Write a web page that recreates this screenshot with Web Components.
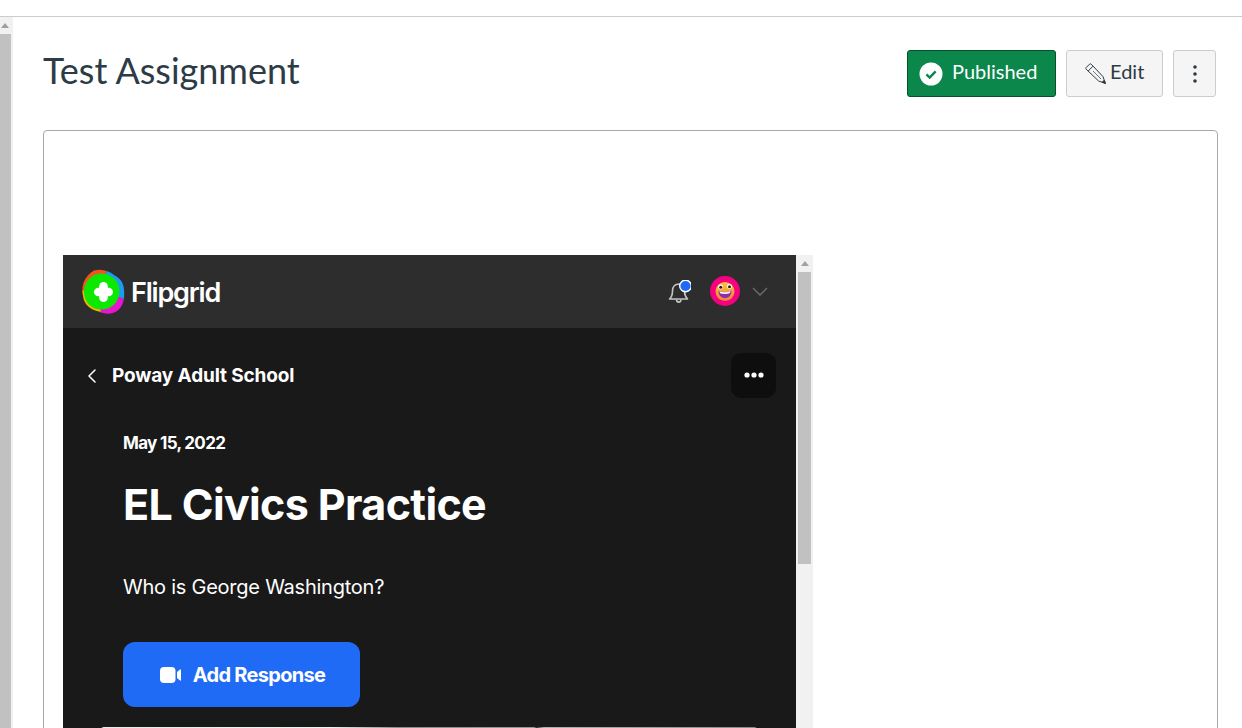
<!DOCTYPE html>
<html lang="en">
<head>
<meta charset="utf-8">
<title>Test Assignment</title>
<style>
  html, body { margin: 0; height: 728px; overflow: hidden; background: #fff; }
</style>
</head>
<body>
<assignment-page>
  <assignment-header slot="header" title-text="Test Assignment"></assignment-header>
  <assignment-box>
    <flipgrid-frame></flipgrid-frame>
  </assignment-box>
</assignment-page>

<script>
// Fake browser scrollbar, used for the page and for the embedded frame
class FakeScrollbar extends HTMLElement {
  constructor() {
    super();
    this.attachShadow({ mode: 'open' });
  }

  connectedCallback() {
    const width = this.getAttribute('bar-width') || 17;
    const arrowWidth = this.getAttribute('arrow-width') || width;
    const thumbWidth = this.getAttribute('thumb-width') || 13;
    const thumbLeft = this.getAttribute('thumb-left') || 0;
    const thumbHeight = this.getAttribute('thumb-height') || 292;
    this.shadowRoot.innerHTML = `
      <style>
        :host { display: block; flex: none; width: ${width}px; background: #f1f1f1; overflow: hidden; }
        .arrow { width: ${arrowWidth}px; height: 17px; display: flex; align-items: center; justify-content: center; }
        .arrow svg { display: block; }
        .thumb { width: ${thumbWidth}px; margin-left: ${thumbLeft}px; height: ${thumbHeight}px; background: #c1c1c1; }
      </style>
      <div class="arrow"><svg width="8" height="5" viewBox="0 0 8 5"><path d="M4 0 L8 5 H0 Z" fill="#a0a0a0"/></svg></div>
      <div class="thumb"></div>
    `;
  }
}

class AssignmentPage extends HTMLElement {
  constructor() {
    super();
    this.attachShadow({ mode: 'open' });
    this.shadowRoot.innerHTML = `
      <style>
        :host { display: block; height: 728px; overflow: hidden; font-family: Lato, "Liberation Sans", sans-serif; color: #2d3b45; }
        .topbar { height: 16px; border-bottom: 1px solid #c7cdd1; }
        .body { display: flex; height: 711px; }
        .main { flex: 1; min-width: 0; padding: 33px 24px 0 30px; }
      </style>
      <div class="topbar"></div>
      <div class="body">
        <fake-scrollbar bar-width="13" arrow-width="9" thumb-width="11" thumb-height="694"></fake-scrollbar>
        <div class="main">
          <slot name="header"></slot>
          <slot></slot>
        </div>
      </div>
    `;
  }
}

class CanvasButton extends HTMLElement {
  constructor() {
    super();
    this.attachShadow({ mode: 'open' });
    this.shadowRoot.innerHTML = `
      <style>
        :host {
          display: inline-flex; align-items: center; box-sizing: border-box; height: 47px;
          background: #f5f5f5; border: 1px solid #c7cdd1; border-radius: 3px; color: #2d3b45;
          font-size: 20px; line-height: 1;
        }
        :host([variant="success"]) { background: #0b874b; border-color: #06502c; color: #fff; }
      </style>
      <slot></slot>
    `;
  }
}

class AssignmentHeader extends HTMLElement {
  constructor() {
    super();
    this.attachShadow({ mode: 'open' });
    this.shadowRoot.innerHTML = `
      <style>
        :host { display: flex; justify-content: space-between; align-items: center; padding-right: 2px; }
        h1 { margin: -7px 0 0; font-size: 36px; font-weight: 400; line-height: 45px; color: #2d3b45; }
        .actions { display: flex; gap: 10px; }
        .published { width: 149px; padding-left: 11px; gap: 9px; }
        .edit { width: 97px; padding-left: 18px; gap: 4px; }
        .more { width: 43px; justify-content: center; }
        .label { margin-bottom: 5px; }
        svg { display: block; flex: none; }
      </style>
      <h1></h1>
      <div class="actions">
        <canvas-button class="published" variant="success">
          <svg width="24" height="24" viewBox="0 0 24 24"><circle cx="12" cy="12" r="11.5" fill="#fff"/><path d="M7.4 12.4 L10.7 15.6 L16.6 9.4" fill="none" stroke="#0b874b" stroke-width="2.4"/></svg>
          <span class="label">Published</span>
        </canvas-button>
        <canvas-button class="edit">
          <svg width="21" height="21" viewBox="0 0 21 21" fill="none" stroke="#2d3b45" stroke-width="1" stroke-linejoin="round"><path d="M1.2 6.2 C0.7 5.7 0.7 5 1.2 4.5 L4.5 1.2 C5 0.7 5.7 0.7 6.2 1.2 L18 13.6 L20.4 20.4 L13.6 18 Z"/><path d="M3.2 8 L8 3.2"/><path d="M8 8 L16 16" stroke="#6a757d"/><path d="M17.2 19.2 L19.2 17.2 L20.4 20.4 Z" fill="#2d3b45"/></svg>
          <span class="label">Edit</span>
        </canvas-button>
        <canvas-button class="more">
          <svg width="4" height="18" viewBox="0 0 4 18" fill="#2d3b45"><circle cx="2" cy="2" r="1.8"/><circle cx="2" cy="9" r="1.8"/><circle cx="2" cy="16" r="1.8"/></svg>
        </canvas-button>
      </div>
    `;
    this.shadowRoot.querySelector('h1').textContent = this.getAttribute('title-text') || '';
  }
}

class AssignmentBox extends HTMLElement {
  constructor() {
    super();
    this.attachShadow({ mode: 'open' });
    this.shadowRoot.innerHTML = `
      <style>
        :host {
          display: block; margin-top: 33px; box-sizing: border-box; height: 700px;
          border: 1px solid #a9a9a9; border-radius: 4px; padding: 124px 0 0 19px;
        }
      </style>
      <slot></slot>
    `;
  }
}

// The embedded Flipgrid topic page
class FlipgridFrame extends HTMLElement {
  constructor() {
    super();
    this.attachShadow({ mode: 'open' });
    this.shadowRoot.innerHTML = `
      <style>
        :host { display: flex; width: 750px; height: 473px; font-family: Inter, "Liberation Sans", sans-serif; color: #fff; }
        .content { flex: none; width: 733px; background: #191919; overflow: hidden; }
        .topbar { display: flex; align-items: center; height: 73px; background: #2d2d2d; padding: 0 28px 0 19px; box-sizing: border-box; }
        .brand { display: flex; align-items: center; gap: 5px; font-size: 27px; font-weight: 600; letter-spacing: -1.2px; }
        .brand span { margin-top: 1px; }
        .right { margin-left: auto; display: flex; align-items: center; }
        .bell { margin-right: 19px; }
        .avatar { margin-top: -1px; }
        .chev { margin-left: 12px; }
        .nav { display: flex; align-items: center; height: 45px; margin-top: 25px; padding: 0 20px 0 24px; }
        .nav .label { margin-left: 16px; font-size: 19px; font-weight: 700; letter-spacing: -0.13px; }
        .dots { margin-left: auto; width: 45px; height: 45px; border-radius: 10px; background: #0e0e0e; display: flex; align-items: center; justify-content: center; }
        .dots svg { margin-top: -1px; }
        .topic { padding: 33px 0 0 60px; }
        .date { font-size: 17px; font-weight: 700; line-height: 24px; letter-spacing: -0.67px; }
        h2 { margin: 23px 0 0; font-size: 43px; font-weight: 700; line-height: 52px; letter-spacing: -0.63px; }
        p { margin: 44px 0 0; font-size: 20px; line-height: 26px; letter-spacing: -0.24px; }
        .add { margin-top: 42px; width: 237px; height: 65px; padding-left: 2px; box-sizing: border-box; border-radius: 12px; background: #1f6bf6; display: flex; align-items: center; justify-content: center; gap: 12px; font-size: 20px; font-weight: 700; letter-spacing: -0.7px; }
        .strip {
          margin: 20px 0 0 38px; width: 656px; height: 10px; border-radius: 3px 3px 0 0;
          background: linear-gradient(90deg, #e6ebe6, #eef2ee 35%, #8c8c8c 45%, #969696 66%, #2a2a2a 66.4%, #b0b0b0 67.5%, #8a8a8a 100%);
        }
        svg { display: block; flex: none; }
      </style>
      <div class="content">
        <div class="topbar">
          <div class="brand">
            <svg width="44" height="46" viewBox="0 0 44 46">
              <defs>
                <clipPath id="blob"><path d="M12 1.5 C20 -0.5 27 2 32 6 C38 9 42 14 42 21 C43 30 41 38 35 42 C29 46 22 45 17 42.5 C9 41 2 36 1 27 C-1 19 1 8 12 1.5 Z"/></clipPath>
              </defs>
              <g clip-path="url(#blob)">
                <polygon points="20,22 -5,21 -5,-5 26,-5" fill="#f4511e"/>
                <polygon points="20,22 26,-5 50,-5 50,33" fill="#1e9bf0"/>
                <polygon points="20,22 50,33 50,50 18,50" fill="#e815d0"/>
                <polygon points="20,22 18,50 -5,50 -5,21" fill="#f7b500"/>
              </g>
              <path d="M19.5 4.5 C29 4.5 37.5 12 37.5 22 C37.5 33 29.5 40.5 19.5 40.5 C9 40.5 2 33 2 22.5 C2 12 10 4.5 19.5 4.5 Z" fill="#0de800"/>
              <g fill="#fff">
                <rect x="17.2" y="13" width="8.6" height="20" rx="4.3"/>
                <rect x="12" y="18.7" width="19" height="8.6" rx="4.3"/>
                <circle cx="21.5" cy="23" r="5.6"/>
              </g>
            </svg>
            <span>Flipgrid</span>
          </div>
          <div class="right">
            <svg class="bell" width="23" height="24" viewBox="0 0 23 24" fill="none" stroke="#c4c4c4" stroke-width="1.6" stroke-linejoin="round">
              <path d="M1.5 19 C4 17 4.5 15 4.5 11 C4.5 6.5 7 4 11 4 C14 4 16.5 6.5 16.5 11 C16.5 15 17.5 17 19.5 19 Z"/>
              <path d="M8.5 19.5 C8.5 23 13 23 13 19.5"/>
              <circle cx="17.5" cy="6" r="5.8" fill="#1f6bf6" stroke="#fff" stroke-width="1.4"/>
            </svg>
            <svg class="avatar" width="30" height="30" viewBox="0 0 30 30">
              <defs>
                <linearGradient id="face" x1="0" y1="0" x2="0" y2="1">
                  <stop offset="0" stop-color="#fbc43e"/>
                  <stop offset="1" stop-color="#f0803a"/>
                </linearGradient>
              </defs>
              <circle cx="15" cy="15" r="15" fill="#f5007e"/>
              <circle cx="15" cy="15.5" r="9.5" fill="url(#face)"/>
              <path d="M8.5 15 C12 16.5 18 16.5 21.5 14.5 C21.5 19.5 18.5 22 15 22 C11.5 22 8.5 19.5 8.5 15 Z" fill="#8b2cb0"/>
              <path d="M9.5 15.3 C12.5 16.6 17.5 16.6 20.5 15 L20 17 C17 18.3 13 18.3 10 17.2 Z" fill="#fff"/>
              <circle cx="10.5" cy="11" r="2.4" fill="#fff"/><circle cx="19.5" cy="10.5" r="2.4" fill="#fff"/>
              <circle cx="10.7" cy="11.2" r="1.5" fill="#2b1a14"/><circle cx="19.5" cy="10.7" r="1.5" fill="#2b1a14"/>
            </svg>
            <svg class="chev" width="16" height="9" viewBox="0 0 16 9" fill="none" stroke="#6e6e6e" stroke-width="1.3"><path d="M1 1 L8 8 L15 1"/></svg>
          </div>
        </div>
        <div class="nav">
          <svg width="9" height="14" viewBox="0 0 9 14" fill="none" stroke="#fff" stroke-width="1.5" stroke-linecap="round" stroke-linejoin="round"><path d="M8 1 L2 7 L8 13"/></svg>
          <span class="label">Poway Adult School</span>
          <div class="dots"><svg width="20" height="6" viewBox="0 0 20 6" fill="#fff"><circle cx="3" cy="3" r="2.6"/><circle cx="10" cy="3" r="2.6"/><circle cx="17" cy="3" r="2.6"/></svg></div>
        </div>
        <div class="topic">
          <div class="date">May 15, 2022</div>
          <h2>EL Civics Practice</h2>
          <p>Who is George Washington?</p>
          <div class="add">
            <svg width="21" height="16" viewBox="0 0 21 16" fill="#fff"><rect x="0" y="0" width="15.5" height="16" rx="4"/><path d="M17 5 L20 2.5 C20.5 2 21 2.4 21 3 V13 C21 13.6 20.5 14 20 13.5 L17 11 Z"/></svg>
            <span>Add Response</span>
          </div>
        </div>
        <div class="strip"></div>
      </div>
      <fake-scrollbar bar-width="17" thumb-width="13" thumb-left="2" thumb-height="292"></fake-scrollbar>
    `;
  }
}

customElements.define('fake-scrollbar', FakeScrollbar);
customElements.define('canvas-button', CanvasButton);
customElements.define('assignment-header', AssignmentHeader);
customElements.define('assignment-box', AssignmentBox);
customElements.define('flipgrid-frame', FlipgridFrame);
customElements.define('assignment-page', AssignmentPage);
</script>
</body>
</html>
